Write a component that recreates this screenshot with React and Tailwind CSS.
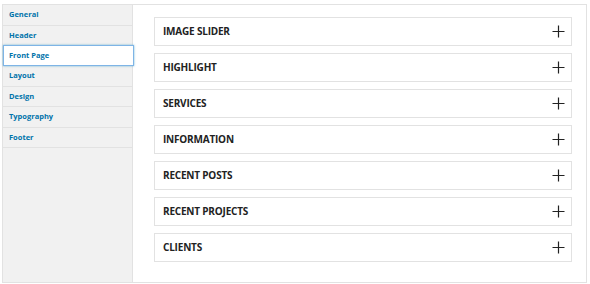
import React from "react";

const tabs = ["General", "Header", "Front Page", "Layout", "Design", "Typography", "Footer"];
const panels = ["IMAGE SLIDER", "HIGHLIGHT", "SERVICES", "INFORMATION", "RECENT POSTS", "RECENT PROJECTS", "CLIENTS"];

function Plus() {
  return (
    <svg width="13" height="13" viewBox="0 0 13 13" className="shrink-0">
      <path d="M6.5 0.5V12.5M0.5 6.5H12.5" stroke="#222" strokeWidth="1.2" fill="none" />
    </svg>
  );
}

export default function App() {
  return (
    <div className="w-[590px] h-[284px] bg-white pl-[2px] pt-[4px]" style={{ fontFamily: '"Open Sans", sans-serif' }}>
      <div className="flex w-[585px] h-[279px] border border-[#e2e2e2] bg-white">
        <div className="w-[130px] shrink-0 bg-[#f1f1f1] border-r border-[#e2e2e2] flex flex-col">
          {tabs.map((t) => {
            const active = t === "Front Page";
            return (
              <div
                key={t}
                className={
                  active
                    ? "h-[21px] -mt-px flex items-center pl-[5px] bg-white border border-[#7eb4e6] shadow-[0_0_2px_rgba(30,140,190,0.6)] text-[7.5px] font-bold text-[#0073aa] w-[131px] relative z-10"
                    : "h-[20.5px] flex items-center pl-[6px] border-b border-[#e2e2e2] text-[7.5px] font-bold text-[#0073aa]"
                }
              >
                {t}
              </div>
            );
          })}
        </div>
        <div className="flex-1 pl-[21px] pr-[14px] pt-[12px] flex flex-col gap-[7px]">
          {panels.map((p) => (
            <div key={p} className="h-[29px] border border-[#e2e2e2] flex items-center justify-between pl-[8px] pr-[6px]">
              <span className="text-[10px] font-bold text-[#222] tracking-[-0.2px]">{p}</span>
              <Plus />
            </div>
          ))}
        </div>
      </div>
    </div>
  );
}
